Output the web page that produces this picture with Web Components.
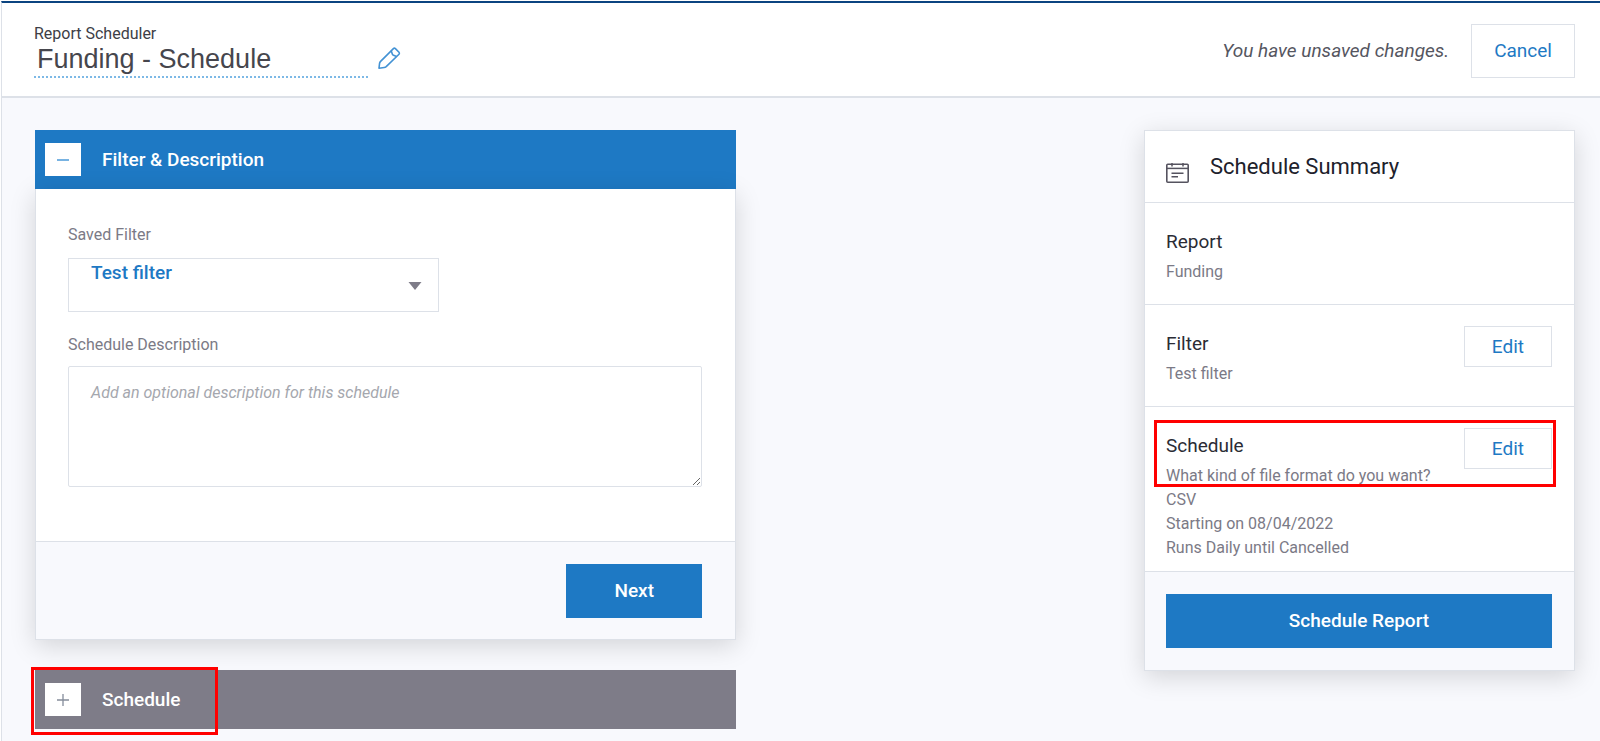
<!DOCTYPE html>
<html lang="en">
<head>
<meta charset="utf-8">
<title>Report Scheduler</title>
<style>
  :root {
    --blue: #1e79c4;
    --line: #dde1e8;
    --tint: #f8f9fd;
    --ink: #2b2c35;
    --muted: #7b7a86;
    --card-shadow: 0 6px 24px rgba(0, 0, 0, .15);
  }
  body {
    margin: 0;
    background: #fff;
    color: var(--ink);
    font-family: Roboto, sans-serif;
    font-size: 16px;
    line-height: 20px;
  }
</style>
</head>
<body>
<scheduler-page>
  <page-header slot="header"></page-header>
  <accordion-panel heading="Filter &amp; Description" open>
    <filter-form></filter-form>
    <action-button slot="footer" kind="primary">Next</action-button>
  </accordion-panel>
  <accordion-panel heading="Schedule" marked></accordion-panel>
  <summary-card slot="aside" heading="Schedule Summary">
    <summary-section heading="Report">Funding</summary-section>
    <summary-section heading="Filter" editable>Test filter</summary-section>
    <summary-section heading="Schedule" editable marked>
      <div>What kind of file format do you want?</div>
      <div>CSV</div>
      <div>Starting on 08/04/2022</div>
      <div>Runs Daily until Cancelled</div>
    </summary-section>
    <action-button slot="footer" kind="primary" block>Schedule Report</action-button>
  </summary-card>
</scheduler-page>

<script>
  const define = (name, render) => customElements.define(name, class extends HTMLElement {
    constructor() {
      super();
      this.attachShadow({ mode: 'open' });
    }
    connectedCallback() {
      const template = document.createElement('template');
      template.innerHTML = '<style>*, *::before { box-sizing: border-box; }</style>' + render(this);
      this.shadowRoot.replaceChildren(template.content.cloneNode(true));
    }
  });
  const escapeText = s => (s || '').replace(/&/g, '&amp;').replace(/</g, '&lt;');

  // Page frame: header on top, steps on the left, summary on the right
  define('scheduler-page', () => `
    <style>
      :host { display: block; padding: 1px 0 0 1px; }
      .frame {
        border-top: 2px solid #0b4480;
        border-left: 1px solid var(--line);
        min-height: calc(100vh - 1px);
        box-sizing: border-box;
        background: var(--tint);
      }
      main {
        display: grid;
        grid-template-columns: 701fr 408fr 431fr;
        align-items: start;
        padding: 32px 25px 10px 33px;
      }
      .steps { display: grid; gap: 30px; min-width: 0; }
      aside { grid-column: 3; min-width: 0; }
    </style>
    <div class="frame">
      <slot name="header"></slot>
      <main>
        <div class="steps"><slot></slot></div>
        <aside><slot name="aside"></slot></aside>
      </main>
    </div>`);

  define('page-header', () => `
    <style>
      :host {
        display: flex;
        align-items: center;
        gap: 22px;
        padding: 21px 25px 18px 32px;
        background: #fff;
        border-bottom: 2px solid var(--line);
      }
      .title { display: grid; grid-template-columns: 334px auto; column-gap: 9px; }
      label { grid-column: 1 / -1; line-height: 20px; color: #3d3e46; }
      input {
        width: 100%;
        height: 34px;
        padding: 0 3px 1px;
        border: 0;
        border-bottom: 2px dotted #7db9e6;
        background: none;
        font: 27px/31px "Liberation Sans", Arial, sans-serif;
        color: #46464d;
      }
      .rename { display: block; border: 0; background: none; padding: 1px 0 0; height: 26px; }
      .rename svg { display: block; }
      .status { margin-left: auto; font-size: 19px; line-height: 24px; font-style: italic; color: #55565f; }
    </style>
    <div class="title">
      <label for="name">Report Scheduler</label>
      <input id="name" value="Funding - Schedule">
      <button class="rename" type="button" aria-label="Rename">
        <svg width="24" height="24" viewBox="0 0 24 24" fill="none" stroke="#4392d4" stroke-width="1.6" stroke-linejoin="round">
          <path d="M2 22.200 L2.600 17.200 Q2.800 16.200 3.600 15.400 L16.400 2.600 Q17.400 1.700 18.400 2.600 L22 6.200 Q22.800 7.200 22 8.200 L9.200 20.600 Q8.300 21.400 7.200 21.500 Z"/>
          <path d="M14.200 4.800 L15.400 8.200 Q15.700 9 16.500 9.200 L19.600 10.400"/>
        </svg>
      </button>
    </div>
    <span class="status">You have unsaved changes.</span>
    <action-button kind="outline">Cancel</action-button>`);

  define('action-button', () => `
    <style>
      :host { display: inline-block; }
      :host([block]) { display: block; }
      button {
        display: block;
        font: 500 19px/24px Roboto, sans-serif;
        height: 54px;
        padding: 0 47px;
        border: 1px solid var(--blue);
        background: var(--blue);
        color: #fff;
      }
      :host([block]) button { width: 100%; }
      :host([kind="outline"]) button, :host([kind="small"]) button {
        padding: 0 22px;
        border-color: var(--line);
        background: #fff;
        color: var(--blue);
        font-weight: 400;
      }
      :host([kind="small"]) button { height: 41px; padding: 0 27px; }
    </style>
    <button type="button"><slot></slot></button>`);

  define('accordion-panel', el => {
    const open = el.hasAttribute('open');
    return `
    <style>
      :host { display: block; position: relative; }
      h2 { margin: 0; font: inherit; }
      .bar {
        display: flex;
        align-items: center;
        gap: 21px;
        width: 100%;
        height: 59px;
        padding: 0 10px;
        border: 0;
        background: ${open ? 'var(--blue)' : '#7e7c88'};
        color: #fff;
        font: 500 19px/24px Roboto, sans-serif;
        text-align: left;
      }
      .toggle { display: grid; place-items: center; width: 36px; height: 33px; background: #fff; }
      .body {
        border: 1px solid var(--line);
        border-top: 0;
        background: #fff;
        box-shadow: var(--card-shadow);
      }
      footer {
        display: flex;
        justify-content: flex-end;
        padding: 22px 33px 21px;
        border-top: 1px solid var(--line);
        background: var(--tint);
      }
      highlight-box { position: absolute; left: -4px; top: -3px; width: 187px; height: 68px; }
    </style>
    <h2><button class="bar" type="button" aria-expanded="${open}">
      <span class="toggle">
        <svg width="12" height="12" viewBox="0 0 12 12" fill="none" stroke="${open ? '#2f8ad2' : '#858d9b'}" stroke-width="1.300">
          <path d="M0 6 H12${open ? '' : ' M6 0 V12'}"/>
        </svg>
      </span>
      <span>${escapeText(el.getAttribute('heading'))}</span>
    </button></h2>
    ${open ? '<div class="body"><slot></slot><footer><slot name="footer"></slot></footer></div>' : ''}
    ${el.hasAttribute('marked') ? '<highlight-box></highlight-box>' : ''}`;
  });

  define('filter-form', () => `
    <style>
      :host { display: block; padding: 36px 33px 54px 32px; }
      label { display: block; line-height: 20px; color: var(--muted); }
      .select { position: relative; max-width: 371px; margin: 13px 0 23px; }
      select {
        appearance: none;
        display: block;
        width: 100%;
        padding: 3px 50px 27px 22px;
        border: 1px solid var(--line);
        border-radius: 0;
        background: #fff;
        color: var(--blue);
        font: 500 19px/22px Roboto, sans-serif;
      }
      .select svg { position: absolute; right: 17px; top: 24px; pointer-events: none; }
      textarea {
        display: block;
        width: 100%;
        height: 121px;
        margin-top: 11px;
        padding: 16px 22px;
        border: 1px solid var(--line);
        border-radius: 2px;
        background: #fff;
        font: 16px/20px Roboto, sans-serif;
      }
      textarea::placeholder { color: #a5a7ae; font-style: italic; }
    </style>
    <label for="filter">Saved Filter</label>
    <div class="select">
      <select id="filter"><option>Test filter</option></select>
      <svg width="14" height="8" viewBox="0 0 14 8"><path d="M.5 0 H13.500 L7 8 Z" fill="#7e7c88"/></svg>
    </div>
    <label for="description">Schedule Description</label>
    <textarea id="description" placeholder="Add an optional description for this schedule"></textarea>`);

  define('summary-card', el => `
    <style>
      :host {
        display: block;
        border: 1px solid var(--line);
        background: #fff;
        box-shadow: var(--card-shadow);
      }
      header { display: flex; align-items: flex-start; gap: 21px; padding: 23px 21px 19px; }
      header svg { display: block; margin-top: 9px; flex: none; }
      h2 { margin: 0; font: 400 22px/26px Roboto, sans-serif; color: #20212b; }
      footer { padding: 22px 22px 22px 21px; border-top: 1px solid var(--line); background: var(--tint); }
    </style>
    <header>
      <svg width="23" height="20" viewBox="0 0 23 20" fill="none" stroke="#55535f">
        <rect x=".8" y="1.300" width="21.400" height="17.900" rx="1" stroke-width="1.600"/>
        <path d="M1 5.400 H22" stroke-width="1.500"/>
        <path d="M6 0 V3.500 M17 0 V3.500" stroke-width="1.500"/>
        <path d="M5.500 10.300 H17.500 M5.500 13.700 H12" stroke-width="1.500"/>
      </svg>
      <h2>${escapeText(el.getAttribute('heading'))}</h2>
    </header>
    <slot></slot>
    <footer><slot name="footer"></slot></footer>`);

  define('summary-section', el => `
    <style>
      :host {
        display: flex;
        align-items: flex-start;
        justify-content: space-between;
        position: relative;
        padding: 21px 22px 20px 21px;
        border-top: 1px solid var(--line);
      }
      :host([marked]) { padding-bottom: 11px; }
      .text { padding-top: 6px; color: var(--muted); line-height: 24px; }
      h3 { margin: 0 0 6px; font: 400 19px/24px Roboto, sans-serif; color: var(--ink); }
      action-button { flex: none; margin-left: -40px; }
      highlight-box { position: absolute; left: 9px; right: 18px; top: 13px; height: 67px; }
    </style>
    <div class="text">
      <h3>${escapeText(el.getAttribute('heading'))}</h3>
      <slot></slot>
    </div>
    ${el.hasAttribute('editable') ? '<action-button kind="small">Edit</action-button>' : ''}
    ${el.hasAttribute('marked') ? '<highlight-box></highlight-box>' : ''}`);

  // Red outline that draws attention to a region
  define('highlight-box', () => `
    <style>
      :host { display: block; box-sizing: border-box; border: 3px solid #f00; pointer-events: none; }
    </style>`);
</script>
</body>
</html>
